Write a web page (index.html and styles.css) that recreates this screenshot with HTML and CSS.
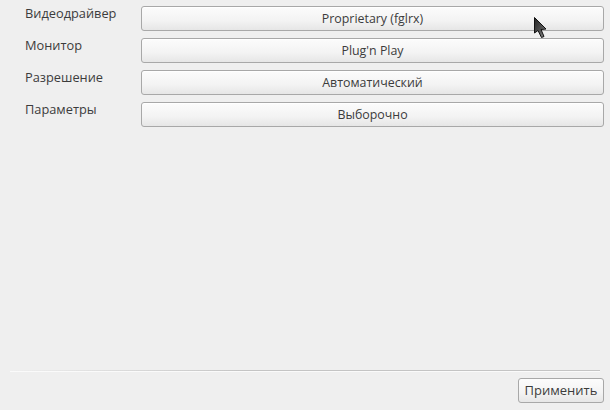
FILE: index.html
```html
<!DOCTYPE html>
<html>
<head>
<meta charset="utf-8">
<link rel="stylesheet" href="styles.css">
</head>
<body>
<div class="page">
  <div class="form">
    <div class="row">
      <div class="label">Видеодрайвер</div>
      <button class="combo">Proprietary (fglrx)</button>
    </div>
    <div class="row">
      <div class="label">Монитор</div>
      <button class="combo">Plug'n Play</button>
    </div>
    <div class="row">
      <div class="label">Разрешение</div>
      <button class="combo">Автоматический</button>
    </div>
    <div class="row">
      <div class="label">Параметры</div>
      <button class="combo">Выборочно</button>
    </div>
  </div>
  <div class="separator"></div>
  <div class="footer">
    <button class="apply">Применить</button>
  </div>
  <svg class="cursor" width="18" height="26" viewBox="0 0 18 26">
    <defs>
      <linearGradient id="cg" x1="0" y1="0" x2="1" y2="1">
        <stop offset="0" stop-color="#222"/>
        <stop offset="0.6" stop-color="#555"/>
        <stop offset="1" stop-color="#999"/>
      </linearGradient>
    </defs>
    <path d="M1.5 1.5 L1.5 17 L5 14.5 L8.5 21.5 L11 20.5 L8 13.5 L13 13 Z" fill="url(#cg)" stroke="#111" stroke-width="1" stroke-linejoin="round"/>
  </svg>
</div>
</body>
</html>
```
FILE: styles.css
```css
html, body {
  margin: 0;
  padding: 0;
  background: #efefef;
}
.page {
  position: relative;
  width: 610px;
  height: 410px;
  display: flex;
  flex-direction: column;
  font-family: "Open Sans", "Noto Sans", sans-serif;
  font-size: 12px;
  color: #3c3c3c;
}
.form {
  display: flex;
  flex-direction: column;
  gap: 7px;
  padding: 6px 6px 0 25px;
  flex: 1;
}
.row {
  display: flex;
  align-items: flex-start;
  height: 25px;
}
.label {
  width: 116px;
  font-size: 12.8px;
  line-height: 14px;
  padding-top: 0;
}
.combo {
  flex: 1;
  height: 25px;
  margin: 0;
  padding: 0 0 1px;
  border: 1px solid #a8a8a8;
  border-radius: 3px;
  background: linear-gradient(#fcfcfc, #f3f3f3 60%, #e6e6e6);
  box-shadow: inset 0 1px 0 #fff;
  font-family: inherit;
  font-size: 12.4px;
  color: #3c3c3c;
  text-align: center;
}
.separator {
  height: 2px;
  margin: 0 10px 0 10px;
  background: linear-gradient(to right, rgba(190,190,190,0), #c4c4c4 40%, #c4c4c4);
  border-bottom: 1px solid #fafafa;
  box-sizing: border-box;
}
.footer {
  display: flex;
  justify-content: flex-end;
  padding: 6px 6px 7px 0;
}
.apply {
  height: 25px;
  width: 86px;
  margin: 0;
  padding: 0 0 1px;
  border: 1px solid #a8a8a8;
  border-radius: 3px;
  background: linear-gradient(#fcfcfc, #f3f3f3 60%, #e6e6e6);
  font-family: inherit;
  font-size: 13px;
  color: #3c3c3c;
}
.cursor {
  position: absolute;
  left: 533px;
  top: 16px;
}
```
